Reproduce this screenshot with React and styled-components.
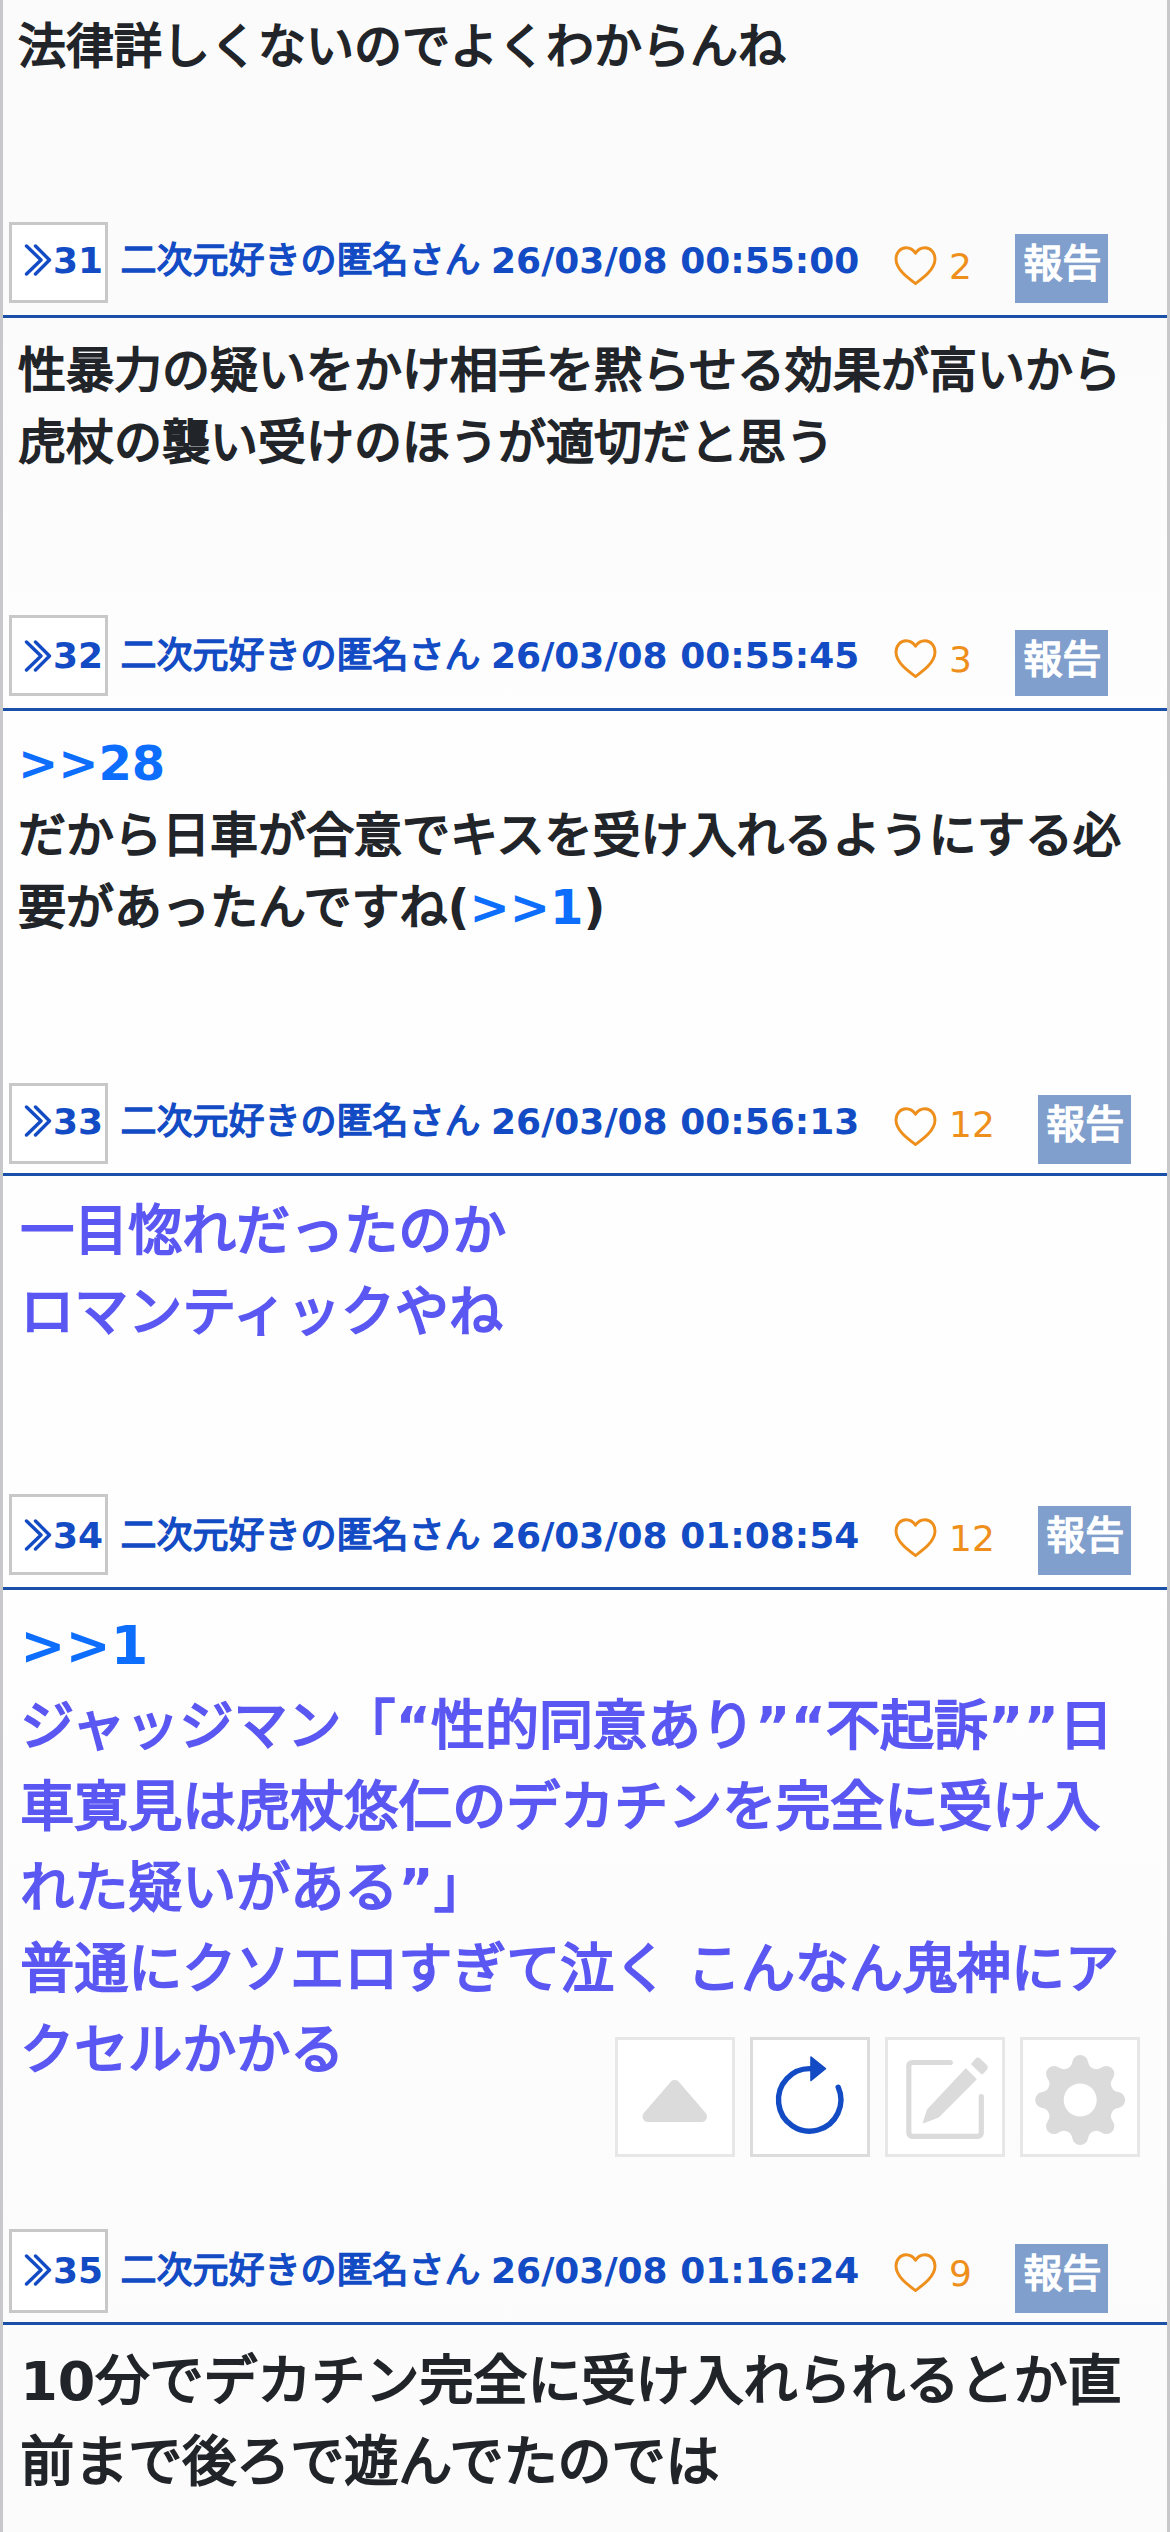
import React from "react";
import styled, { createGlobalStyle } from "styled-components";

const Global = createGlobalStyle`
  *, *::before, *::after { box-sizing: border-box; }
  html, body { margin: 0; padding: 0; }
  body {
    width: 1170px;
    height: 2532px;
    overflow: hidden;
    font-family: "DejaVu Sans", "Noto Sans CJK JP", sans-serif;
    font-weight: 700;
    color: #212529;
  }
`;

const Thread = styled.main`
  position: relative;
  width: 1170px;
  height: 2532px;
  overflow: hidden;
  border: solid #c8c8cb;
  border-width: 0 3px;
  background: linear-gradient(#fbfbfb 0%, #fbfbfb 12%, #fefefe 32%, #fefefe 62%, #fcfcfc 80%, #fbfbfb 100%);
`;

const Post = styled.article`
  display: flex;
  flex-direction: column;
`;

const PostHeader = styled.header`
  --embolden: 0.0405em;
  display: flex;
  align-items: flex-start;
  height: ${(p) => p.$height}px;
  padding-left: 6px;
  border-bottom: 3px solid #1a50a8;
  font-size: 36px;
  line-height: 54px;
  color: #124bc4;
  white-space: nowrap;
`;

const ReplyBox = styled.button`
  display: flex;
  align-items: flex-start;
  width: 99px;
  height: ${(p) => p.$height}px;
  margin: 0;
  padding: ${(p) => p.$top}px 0 0 12px;
  border: 3px solid #c8c8c8;
  background: #fff;
  font: inherit;
  color: inherit;
`;

const ReplyIcon = styled.svg`
  width: 28px;
  height: 32px;
  margin: 10.5px 1px 0 0;
  flex: none;
`;

const Meta = styled.span`
  width: 772.5px;
  margin: ${(p) => p.$top}px 0 0 12.5px;
`;

const When = styled.time`
  margin-left: -2px;
`;

const Like = styled.span`
  display: flex;
  margin-top: ${(p) => p.$top}px;
  color: #ee8f1c;
  font-weight: 400;
`;

const HeartIcon = styled.svg`
  width: 44px;
  height: 42px;
  margin-top: ${(p) => p.$top}px;
`;

const Count = styled.span`
  margin-left: 12px;
`;

const Report = styled.button`
  display: flex;
  align-items: flex-start;
  width: 93px;
  height: ${(p) => p.$height}px;
  margin: ${(p) => p.$top}px 0 0 43px;
  padding: 3px 0 0 8.5px;
  border: 0;
  background: #809fcd;
  color: #fff;
  font: inherit;
  font-size: 39px;
  line-height: 54px;
`;

const Body = styled.div`
  --embolden: ${(p) => (p.$large ? 0.0382 : 0.039)}em;
  height: ${(p) => p.$height}px;
  padding: ${(p) => p.$top}px 0 0 ${(p) => (p.$large ? 17.25 : 15)}px;
  font-size: ${(p) => (p.$large ? 54 : 48)}px;
  line-height: ${(p) => (p.$large ? 81 : 72)}px;
  color: ${(p) => (p.$accent ? "#5a57f2" : "#212529")};
  white-space: nowrap;
`;

const Line = styled.div``;

const Anchor = styled.a`
  color: #0d6efd;
  text-decoration: none;
`;

const Emboldened = styled.span`
  font-weight: 400;
  -webkit-text-stroke: var(--embolden) currentColor;
`;

const Tools = styled.nav`
  position: absolute;
  right: 27px;
  bottom: 375px;
  display: flex;
  gap: 15px;
`;

const Tool = styled.button`
  width: 120px;
  height: 120px;
  padding: 0;
  border: 3px solid ${(p) => (p.$active ? "#dcdcdc" : "#e7e7e7")};
  background: #fff;
  color: ${(p) => (p.$active ? "#124bc4" : "#dbdbdb")};
`;

const ToolIcon = styled.svg`
  display: block;
  width: 114px;
  height: 114px;
`;

/* Japanese runs get an outlined regular weight; Latin runs keep the real bold face. */
const Text = ({ children }) =>
  children
    .split(/([\u3000-\u30ff\u4e00-\u9fff]+)/)
    .filter(Boolean)
    .map((run, i) =>
      /[\u3000-\u30ff\u4e00-\u9fff]/.test(run) ? <Emboldened key={i}>{run}</Emboldened> : run
    );

const gearPath = (() => {
  const teeth = 8;
  const at = (r, a) => [60.2 + r * Math.sin(a), 63 - r * Math.cos(a)];
  const mix = (a, b, t) => [a[0] + (b[0] - a[0]) * t, a[1] + (b[1] - a[1]) * t];
  const f = (p) => p.map((n) => n.toFixed(2)).join(" ");
  const step = (Math.PI * 2) / teeth;
  let d = "";
  for (let i = 0; i < teeth; i += 1) {
    const a = i * step;
    const tip = at(37, a);
    const before = mix(tip, at(42.3, a - step / 2), 8 / 16.34);
    const after = mix(tip, at(42.3, a + step / 2), 8 / 16.34);
    d += i === 0 ? `M${f(before)}` : `A8.34 8.34 0 0 0 ${f(before)}`;
    d += `A8 8 0 0 1 ${f(after)}`;
  }
  const first = mix(at(37, 0), at(42.3, -step / 2), 8 / 16.34);
  d += `A8.34 8.34 0 0 0 ${f(first)}Z`;
  return `${d}M43.7 63a16.5 16.5 0 1 0 33 0a16.5 16.5 0 1 0 -33 0Z`;
})();

const Chevrons = () => (
  <ReplyIcon viewBox="0 0 28 32" fill="none" stroke="currentColor" strokeWidth="3.4" strokeLinecap="round" strokeLinejoin="round">
    <path d="M2.5 2L17 16L2.5 30M11.5 2L25.5 16L11.5 30" />
  </ReplyIcon>
);

const Heart = ({ top }) => (
  <HeartIcon $top={top} viewBox="0 0 44 42" fill="none" stroke="currentColor" strokeWidth="2.9" strokeLinejoin="round">
    <path d="M22.5 38.5C15 33 3 24.5 3 14C3 7.5 7.5 2.7 13 2.7C17.5 2.7 20.5 5 22.5 8.2C24.5 5 27.5 2.7 32 2.7C37.5 2.7 42 7.5 42 14C42 24.5 30 33 22.5 38.5Z" />
  </HeartIcon>
);

const posts = [
  {
    id: 31, time: "00:55:00", likes: 2, header: 96, box: 81, boxText: 8.6, meta: 11.6, like: 18, heart: 5, reportTop: 12, report: 69,
    body: 297, top: 16, lines: ["性暴力の疑いをかけ相手を黙らせる効果が高いから", "虎杖の襲い受けのほうが適切だと思う"],
  },
  {
    id: 32, time: "00:55:45", likes: 3, header: 96, box: 81, boxText: 11.2, meta: 14.2, like: 18, heart: 5, reportTop: 15, report: 66,
    body: 372, top: 16,
    lines: [<Anchor>&gt;&gt;28</Anchor>, "だから日車が合意でキスを受け入れるようにする必", <><Text>要があったんですね</Text>(<Anchor>&gt;&gt;1</Anchor>)</>],
  },
  {
    id: 33, time: "00:56:13", likes: 12, header: 93, box: 81, boxText: 8.6, meta: 11.6, like: 15, heart: 8, reportTop: 12, report: 69,
    body: 318, top: 15, large: true, accent: true, lines: ["一目惚れだったのか", "ロマンティックやね"],
  },
  {
    id: 34, time: "01:08:54", likes: 12, header: 96, box: 81, boxText: 11.6, meta: 14.6, like: 18, heart: 5, reportTop: 12, report: 69,
    body: 639, top: 15, large: true, accent: true,
    lines: [<Anchor>&gt;&gt;1</Anchor>, "ジャッジマン「“性的同意あり”“不起訴””日", "車寛見は虎杖悠仁のデカチンを完全に受け入", "れた疑いがある”」", "普通にクソエロすぎて泣く こんなん鬼神にア", "クセルかかる"],
  },
  {
    id: 35, time: "01:16:24", likes: 9, header: 96, box: 84, boxText: 11.6, meta: 14.6, like: 18, heart: 5, reportTop: 15, report: 69,
    body: 207, top: 15.5, large: true, lines: ["10分でデカチン完全に受け入れられるとか直", "前まで後ろで遊んでたのでは"],
  },
];

export default function App() {
  return (
    <>
      <Global />
      <Thread lang="ja">
        <Body $height={222} $top={10}>
          <Line><Text>法律詳しくないのでよくわからんね</Text></Line>
        </Body>
        {posts.map((p) => (
          <Post key={p.id}>
            <PostHeader $height={p.header}>
              <ReplyBox $height={p.box} $top={p.boxText}>
                <Chevrons />
                {p.id}
              </ReplyBox>
              <Meta $top={p.meta}>
                <Text>二次元好きの匿名さん</Text> <When>26/03/08 {p.time}</When>
              </Meta>
              <Like $top={p.like}>
                <Heart top={p.heart} />
                <Count>{p.likes}</Count>
              </Like>
              <Report $top={p.reportTop} $height={p.report}>
                <Text>報告</Text>
              </Report>
            </PostHeader>
            <Body $height={p.body} $top={p.top} $large={p.large} $accent={p.accent}>
              {p.lines.map((line, i) => (
                <Line key={i}>{typeof line === "string" ? <Text>{line}</Text> : line}</Line>
              ))}
            </Body>
          </Post>
        ))}
        <Tools>
          <Tool aria-label="トップへ">
            <ToolIcon viewBox="3 3 114 114" fill="currentColor" stroke="currentColor" strokeWidth="11" strokeLinejoin="round">
              <path d="M33 79.5H86.5L59.8 48.5Z" />
            </ToolIcon>
          </Tool>
          <Tool $active aria-label="更新">
            <ToolIcon viewBox="3 3 114 114" fill="none" stroke="currentColor" strokeWidth="5.4" strokeLinecap="round">
              <path d="M61 31.7A31.2 31.2 0 1 0 88.2 50.2" />
              <path d="M61 20L75.4 31.7L61 43.4Z" fill="currentColor" strokeWidth="1.6" strokeLinejoin="round" />
            </ToolIcon>
          </Tool>
          <Tool aria-label="書き込み">
            <ToolIcon viewBox="3 3 114 114" fill="none" stroke="currentColor" strokeWidth="5.2" strokeLinecap="round" strokeLinejoin="round">
              <path d="M65.3 25.5H27.6Q23.8 25.5 23.8 29.5V95.3Q23.8 99.3 27.6 99.3H92.4Q96.3 99.3 96.3 95.3V59.5" />
              <path d="M38.6 85.4L42.8 72.8L80.8 32.2L90.8 42.3L53.4 79.7Z" fill="currentColor" strokeWidth="1.6" />
              <path d="M87.6 27L91.7 22.4Q93 21.4 94.4 22.6L101.1 29.2Q102.2 30.4 101.2 31.7L97 36Z" fill="currentColor" strokeWidth="2.6" />
            </ToolIcon>
          </Tool>
          <Tool aria-label="設定">
            <ToolIcon viewBox="3 3 114 114" fill="currentColor">
              <path fillRule="evenodd" d={gearPath} />
            </ToolIcon>
          </Tool>
        </Tools>
      </Thread>
    </>
  );
}
